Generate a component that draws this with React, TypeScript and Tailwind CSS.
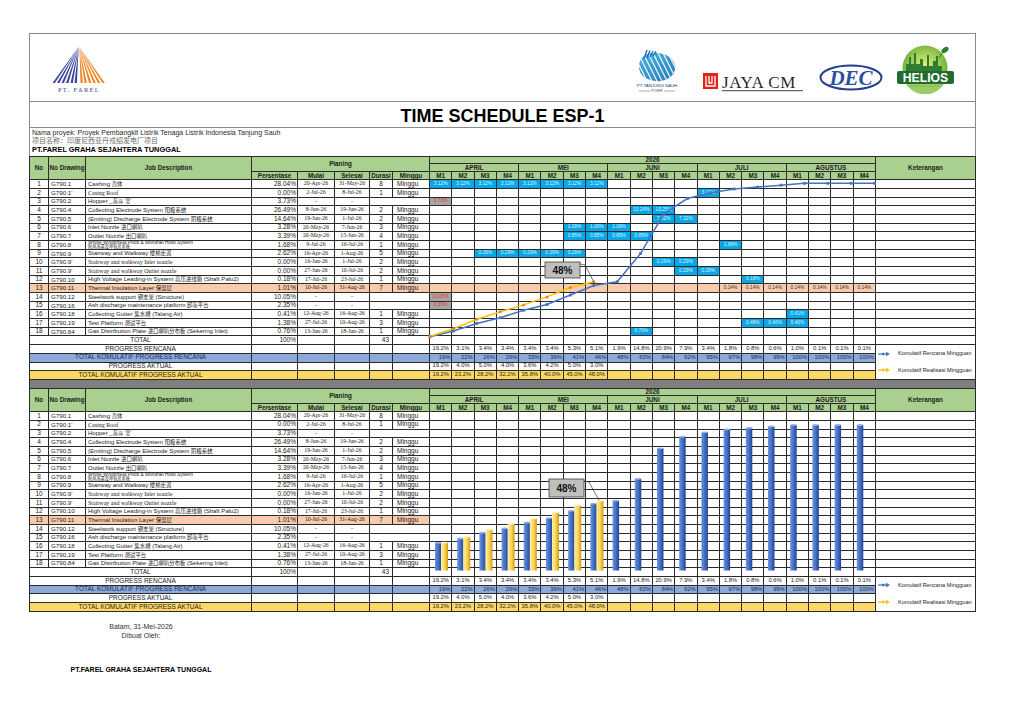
import React from "react";

const SERIF = "font-['Liberation_Serif','Noto_Sans_CJK_SC',serif]";
const C = "border-r border-b border-[#2a2a2a] flex items-center overflow-hidden whitespace-nowrap leading-none";
const GRID =
  "grid w-[947px] grid-cols-[19px_37px_166px_46px_37px_35px_23px_37px_repeat(20,22.3px)_100px] grid-rows-[7.4px_8px_8px_repeat(23,8.68px)] border-l border-t border-[#2a2a2a] text-[6.5px] text-[#1b1b1b]";

const MONTHS = ["APRIL", "MEI", "JUNI", "JULI", "AGUSTUS"];
const WEEKS = Array.from({ length: 20 }, (_, i) => i + 1);

const planCum = [19, 22, 26, 29, 33, 36, 41, 46, 48, 63, 84, 92, 95, 97, 98, 99, 100, 100, 100, 100];
const actualCum = [19.2, 23.2, 28.2, 32.2, 35.8, 40, 45, 48];
const planWeekly = ["19.2%", "3.1%", "3.4%", "3.4%", "3.4%", "3.4%", "5.3%", "5.1%", "1.9%", "14.8%", "20.9%", "7.9%", "3.4%", "1.8%", "0.8%", "0.6%", "1.0%", "0.1%", "0.1%", "0.1%"];
const actualWeekly = ["19.2%", "4.0%", "5.0%", "4.0%", "3.6%", "4.2%", "5.0%", "3.0%"];

function span(from: number, to: number, v: string) {
  const o: Record<number, string> = {};
  for (let i = from; i <= to; i++) o[i] = v;
  return o;
}

// CJK characters come out a little smaller than the latin text in the sheet
function mixed(text: string) {
  return (
    <span>
      {text.split(/([\u3000-\u9fff\uff00-\uffef]+)/).map((part, i) =>
        /[\u3000-\u9fff\uff00-\uffef]/.test(part) ? (
          <span key={i} className="text-[5.4px]">{part}</span>
        ) : (
          <React.Fragment key={i}>{part}</React.Fragment>
        )
      )}
    </span>
  );
}

type Task = {
  no: string;
  dwg: string;
  job: string;
  pct: string;
  start: string;
  end: string;
  dur?: string;
  cells: Record<number, string>;
  serif?: boolean;
  gray?: boolean;
  hl?: boolean;
  merged?: boolean;
  twoLine?: [string, string];
};

const tasks: Task[] = [
  { no: "1", dwg: "G790.1", job: "Cashing 壳体", pct: "28.04%", start: "20-Apr-26", end: "31-May-26", dur: "8", cells: span(1, 8, "3.12%") },
  { no: "2", dwg: "G790.1'", job: "Casing Roof", serif: true, pct: "0.00%", start: "2-Jul-26", end: "8-Jul-26", dur: "1", cells: { 13: "3.12%" } },
  { no: "3", dwg: "G790.2", job: "Hopper _灰斗 室", pct: "3.73%", start: "-", end: "-", merged: true, gray: true, cells: { 1: "3.73%" } },
  { no: "4", dwg: "G790.4", job: "Collecting Electrode System 阳极系统", pct: "26.49%", start: "8-Jun-26", end: "19-Jun-26", dur: "2", cells: { 10: "13.24%", 11: "13.25%" } },
  { no: "5", dwg: "G790.5", job: "(Emiting) Discharge Electrode System 阴极系统", pct: "14.64%", start: "19-Jun-26", end: "1-Jul-26", dur: "2", cells: span(11, 12, "7.32%") },
  { no: "6", dwg: "G790.6", job: "Inlet Nozzle 进口喇叭", pct: "3.28%", start: "20-May-26", end: "7-Jun-26", dur: "3", cells: span(7, 9, "1.09%") },
  { no: "7", dwg: "G790.7", job: "Outlet Nozzle 出口喇叭", pct: "3.39%", start: "20-May-26", end: "15-Jun-26", dur: "4", cells: span(7, 10, "0.85%") },
  { no: "8", dwg: "G790.8", job: "", twoLine: ["Whole Windshield Proof & Monorail Hoist System", "防风雨罩及单轨吊系统"], pct: "1.68%", start: "9-Jul-26", end: "16-Jul-26", dur: "1", cells: { 14: "1.68%" } },
  { no: "9", dwg: "G790.9", job: "Stairway and Walkway 楼梯走道", pct: "2.62%", start: "16-Apr-26", end: "1-Aug-26", dur: "5", cells: span(3, 7, "0.29%") },
  { no: "10", dwg: "G790.9'", job: "Stairway and walkway Inlet nozzle", serif: true, pct: "0.00%", start: "16-Jun-26", end: "1-Jul-26", dur: "2", cells: span(11, 12, "0.29%") },
  { no: "11", dwg: "G790.9'", job: "Stairway and walkway Outlet nozzle", serif: true, pct: "0.00%", start: "27-Jun-26", end: "10-Jul-26", dur: "2", cells: span(12, 13, "0.29%") },
  { no: "12", dwg: "G790.10", job: "High Voltage Leading-in System 高压进线箱 (Shaft Palu2)", pct: "0.18%", start: "17-Jul-26", end: "23-Jul-26", dur: "1", cells: { 15: "0.18%" } },
  { no: "13", dwg: "G790.11", job: "Thermal Insulation Layer 保温层", pct: "1.01%", start: "10-Jul-26", end: "31-Aug-26", dur: "7", hl: true, cells: span(14, 20, "0.14%") },
  { no: "14", dwg: "G790.12", job: "Steelwork support 钢支架 (Structure)", pct: "10.05%", start: "-", end: "-", merged: true, gray: true, cells: { 1: "10.05%" } },
  { no: "15", dwg: "G790.16", job: "Ash discharge maintenance platform 卸灰平台", pct: "2.35%", start: "-", end: "-", merged: true, gray: true, cells: { 1: "2.35%" } },
  { no: "16", dwg: "G790.18", job: "Collecting Gutter 集水槽 (Talang Air)", pct: "0.41%", start: "12-Aug-26", end: "16-Aug-26", dur: "1", cells: { 17: "0.41%" } },
  { no: "17", dwg: "G790.19", job: "Test Platform 测试平台", pct: "1.38%", start: "27-Jul-26", end: "10-Aug-26", dur: "3", cells: span(15, 17, "0.46%") },
  { no: "18", dwg: "G790.84", job: "Gas Distribution Plate 进口喇叭分布板 (Sekering Inlet)", pct: "0.76%", start: "13-Jun-26", end: "18-Jun-26", dur: "1", cells: { 10: "0.76%" } },
];

function HeaderCells() {
  const h = `${C} justify-center bg-[#a9d08e] font-bold text-[6.3px]`;
  return (
    <>
      <div className={`${h} row-span-3`}>No</div>
      <div className={`${h} row-span-3`}>No Drawing</div>
      <div className={`${h} row-span-3`}>Job Description</div>
      <div className={`${h} col-span-5 row-span-2`}>Planing</div>
      <div className={`${h} col-span-20`}>2026</div>
      <div className={`${h} row-span-3`}>Keterangan</div>
      {MONTHS.map((m) => (
        <div key={m} className={`${h} col-span-4`}>{m}</div>
      ))}
      {["Persentase", "Mulai", "Selesai", "Durasi", "Minggu"].map((t) => (
        <div key={t} className={h}>{t}</div>
      ))}
      {WEEKS.map((w) => (
        <div key={w} className={h}>M{((w - 1) % 4) + 1}</div>
      ))}
    </>
  );
}

function TaskRow({ t, showCells }: { t: Task; showCells: boolean }) {
  const bg = t.hl ? "bg-[#f8cbad]" : "bg-white";
  return (
    <>
      <div className={`${C} ${bg} justify-center`}>{t.no}</div>
      <div className={`${C} ${bg} pl-[2px] text-[6.2px]`}>{t.dwg}</div>
      <div className={`${C} ${bg} pl-[2px] text-[6px] ${t.serif ? SERIF : ""}`}>
        {t.twoLine ? (
          <div className="flex flex-col text-[4.8px] leading-[4.2px]">
            <span>{t.twoLine[0]}</span>
            <span className="text-[4.2px]">{t.twoLine[1]}</span>
          </div>
        ) : (
          mixed(t.job)
        )}
      </div>
      <div className={`${C} ${bg} justify-end pr-[1px]`}>{t.pct}</div>
      <div className={`${C} ${bg} justify-center text-[5.8px] ${SERIF}`}>{t.start}</div>
      <div className={`${C} ${bg} justify-center text-[5.8px] ${SERIF}`}>{t.end}</div>
      {t.merged ? (
        <div className={`${C} ${bg} col-span-2`} />
      ) : (
        <>
          <div className={`${C} ${bg} justify-center`}>{t.dur}</div>
          <div className={`${C} ${bg} pl-[4px]`}>Minggu</div>
        </>
      )}
      {WEEKS.map((w) => {
        const v = showCells ? t.cells[w] : undefined;
        let cls = "bg-white";
        if (v && t.gray) cls = "bg-[#a6a6a6] text-[#e5322d]";
        else if (v && t.hl) cls = "bg-[#f8cbad] text-[#333]";
        else if (v) cls = "bg-[#0aa7e8] text-[#dff4ff]";
        else if (t.hl && showCells) cls = "bg-[#f8cbad]";
        return (
          <div key={w} className={`${C} ${cls} justify-center text-[4.8px]`}>
            {v}
          </div>
        );
      })}
      <div className={`${C} bg-white`} />
    </>
  );
}

function Arrow({ color }: { color: string }) {
  return (
    <svg width="12" height="6" viewBox="0 0 12 6" className="shrink-0">
      <line x1="0" y1="3" x2="9" y2="3" stroke={color} strokeWidth="1.2" />
      <polygon points="8,0.8 12,3 8,5.2" fill={color} />
      <rect x="4" y="1.8" width="2.4" height="2.4" fill={color} />
    </svg>
  );
}

function SummaryRows() {
  const defs = [
    { label: "PROGRESS RENCANA", bg: "bg-white", txt: "", vals: planWeekly, align: "justify-center" },
    { label: "TOTAL KOMULATIF PROGRESS RENCANA", bg: "bg-[#8eaadb]", txt: "text-[#1d2b55]", vals: planCum.map((v) => `${v}%`), align: "justify-end pr-[1px]" },
    { label: "PROGRESS AKTUAL", bg: "bg-white", txt: "", vals: actualWeekly, align: "justify-center" },
    { label: "TOTAL KOMULATIF PROGRESS AKTUAL", bg: "bg-[#ffd966]", txt: "text-[#2b2410]", vals: actualCum.map((v) => `${v.toFixed(1)}%`), align: "justify-center" },
  ];
  return (
    <>
      <div className={`${C} col-span-3 justify-center bg-white`}>TOTAL</div>
      <div className={`${C} justify-end pr-[1px] bg-white`}>100%</div>
      <div className={`${C} bg-white`} />
      <div className={`${C} bg-white`} />
      <div className={`${C} justify-end pr-[3px] bg-white`}>43</div>
      <div className={`${C} bg-white`} />
      {WEEKS.map((w) => (
        <div key={w} className={`${C} bg-white`} />
      ))}
      <div className={`${C} bg-white`} />
      {defs.map((d, i) => (
        <React.Fragment key={d.label}>
          <div className={`${C} col-span-3 justify-center ${d.bg} ${d.txt}`}>{d.label}</div>
          {[0, 1, 2, 3, 4].map((k) => (
            <div key={k} className={`${C} ${d.bg}`} />
          ))}
          {WEEKS.map((w) => (
            <div key={w} className={`${C} ${d.bg} ${d.txt} ${d.align} text-[5.8px]`}>
              {d.vals[w - 1] ?? ""}
            </div>
          ))}
          {i === 0 && (
            <div className="row-span-4 border-r border-b border-[#2a2a2a] bg-white flex flex-col overflow-hidden">
              <div className="h-[17.36px] flex items-center pl-[2px] gap-[8px]">
                <Arrow color="#4472c4" />
                <span className="text-[5.6px] whitespace-nowrap">Komulatif Rencana Mingguan</span>
              </div>
              <div className="h-[17.36px] flex items-center pl-[2px] gap-[8px]">
                <Arrow color="#ffc000" />
                <span className="text-[5.6px] whitespace-nowrap">Komulatif Realisasi Mingguan</span>
              </div>
            </div>
          )}
        </React.Fragment>
      ))}
    </>
  );
}

function Callout({ x, y, h, tip }: { x: number; y: number; h: number; tip: [number, number] }) {
  return (
    <g>
      <polyline
        points={`${x + 35},${y + 2} ${x + 40},${y + 3} ${tip[0]},${tip[1]}`}
        fill="none"
        stroke="#3a3a3a"
        strokeWidth="0.7"
      />
      <rect x={x} y={y} width="35" height={h} fill="#bfbfbf" stroke="#404040" strokeWidth="0.8" />
      <text
        x={x + 17.5}
        y={y + h / 2 + 3.6}
        textAnchor="middle"
        fontFamily="Liberation Sans, sans-serif"
        fontWeight="bold"
        fontSize="10"
        fill="#111"
      >
        48%
      </text>
    </g>
  );
}

function LineOverlay() {
  const lx = (k: number) => 401 + 23.4 * k;
  const ly = (p: number) => 216.7 - 1.894 * p;
  const plan = planCum.map((p, k) => `${lx(k).toFixed(1)},${ly(p).toFixed(1)}`).join(" ");
  const act = actualCum.map((p, k) => `${lx(k).toFixed(1)},${ly(p).toFixed(1)}`).join(" ");
  return (
    <svg className="absolute left-0 top-0 pointer-events-none" width="947" height="224" viewBox="0 0 947 224">
      <polyline points={plan} fill="none" stroke="#4472c4" strokeWidth="1.5" />
      {planCum.map((p, k) => (
        <rect key={k} x={lx(k) - 1.4} y={ly(p) - 1.4} width="2.8" height="2.8" fill="#4472c4" />
      ))}
      <polyline points={act} fill="none" stroke="#ffc000" strokeWidth="1.5" />
      {actualCum.map((p, k) => (
        <circle key={k} cx={lx(k)} cy={ly(p)} r="1.5" fill="#ed7d31" />
      ))}
      <Callout x={516} y={106} h={16} tip={[lx(7), ly(48)]} />
    </svg>
  );
}

function BarOverlay() {
  const base = 182.5;
  const by = (p: number) => base - 1.455 * p;
  return (
    <svg className="absolute left-0 top-0 pointer-events-none" width="947" height="224" viewBox="0 0 947 224">
      <defs>
        <linearGradient id="gBlue" x1="0" x2="1" y1="0" y2="0">
          <stop offset="0" stopColor="#6a95e0" />
          <stop offset="0.55" stopColor="#3f6cc2" />
          <stop offset="1" stopColor="#25448a" />
        </linearGradient>
        <linearGradient id="gYel" x1="0" x2="1" y1="0" y2="0">
          <stop offset="0" stopColor="#fff0b3" />
          <stop offset="0.55" stopColor="#ffd44f" />
          <stop offset="1" stopColor="#c99a1c" />
        </linearGradient>
      </defs>
      {planCum.map((p, k) => {
        const x = 406 + 22.2 * k;
        const t = by(p);
        return (
          <g key={k}>
            <rect x={x} y={t} width="6.5" height={base - t} fill="url(#gBlue)" />
            <ellipse cx={x + 3.25} cy={t} rx="3.25" ry="0.9" fill="#93b3ec" />
          </g>
        );
      })}
      {actualCum.map((p, k) => {
        const x = 412 + 22.2 * k;
        const t = by(p);
        return (
          <g key={k}>
            <rect x={x} y={t} width="7" height={base - t} fill="url(#gYel)" />
            <ellipse cx={x + 3.5} cy={t} rx="3.5" ry="0.9" fill="#fff4c4" />
          </g>
        );
      })}
      <Callout x={520} y={91} h={18} tip={[570, 112.5]} />
    </svg>
  );
}

function ScheduleTable({ chart }: { chart: "line" | "bar" }) {
  return (
    <div className="relative w-[947px]">
      <div className={GRID}>
        <HeaderCells />
        {tasks.map((t) => (
          <TaskRow key={t.no} t={t} showCells={chart === "line"} />
        ))}
        <SummaryRows />
      </div>
      {chart === "line" ? <LineOverlay /> : <BarOverlay />}
    </div>
  );
}

function FarelLogo() {
  const left = [1.5, 6, 10.5, 15, 19.5, 23.5];
  const right = [29.5, 33.5, 38, 42.5, 47, 51.5];
  return (
    <svg width="56" height="48" viewBox="0 0 56 48" className="mt-[12px] ml-[21px]">
      {left.map((b) => (
        <polygon key={b} points={`27.6,1 ${b},37 ${b + 2.4},37`} fill="#3e47a0" />
      ))}
      {right.map((b) => (
        <polygon key={b} points={`28.4,1 ${b},37 ${b + 2.4},37`} fill="#ef8424" />
      ))}
      <text x="28" y="46" textAnchor="middle" fontFamily="Liberation Serif, serif" fontSize="6.5" letterSpacing="1.3" fill="#3e47a0">
        PT. FAREL
      </text>
    </svg>
  );
}

function TanjungLogo() {
  return (
    <svg width="60" height="44" viewBox="0 0 60 44" className="mt-[15px]">
      <defs>
        <clipPath id="tsClip">
          <path d="M12 18 C12 6 22 3 31 4 C42 5 49 12 48 20 C47 28 38 33 29 32 C19 31 12 26 12 18 Z" />
        </clipPath>
        <linearGradient id="tsGrad" x1="0" y1="0" x2="1" y2="1">
          <stop offset="0" stopColor="#56c2e8" />
          <stop offset="1" stopColor="#1a6fb3" />
        </linearGradient>
      </defs>
      <g clipPath="url(#tsClip)">
        <rect x="0" y="0" width="60" height="36" fill="url(#tsGrad)" />
        {[0, 1, 2, 3, 4, 5, 6, 7, 8].map((i) => (
          <line key={i} x1={4 + i * 5} y1="0" x2={22 + i * 5} y2="36" stroke="#ffffff" strokeWidth="1.1" />
        ))}
      </g>
      {[0, 1, 2, 3].map((i) => (
        <line key={i} x1={17 + i * 3} y1={10 - i} x2={20 + i * 3} y2={1 + i * 0.5} stroke="#1f73b8" strokeWidth="1.4" />
      ))}
      <text x="30" y="38" textAnchor="middle" fontFamily="Liberation Sans, sans-serif" fontSize="4.4" fill="#1d3d70">
        PT TANJUNG SAUH
      </text>
      <line x1="12" y1="42" x2="23" y2="42" stroke="#555" strokeWidth="0.5" />
      <text x="30" y="43" textAnchor="middle" fontFamily="Liberation Sans, sans-serif" fontSize="3" fill="#555">
        POWER
      </text>
      <line x1="37" y1="42" x2="48" y2="42" stroke="#555" strokeWidth="0.5" />
    </svg>
  );
}

function JayaLogo() {
  return (
    <svg width="102" height="22" viewBox="0 0 102 22" className="ml-[15px] mt-[36px]">
      <rect x="1" y="3" width="15" height="16" fill="#e2231a" />
      <path d="M4 6 V16 H13 V6 M7 6 V13 H10 V6" stroke="#ffffff" strokeWidth="1.3" fill="none" />
      <text x="20" y="17.5" fontFamily="Liberation Serif, serif" fontSize="17" letterSpacing="0.6" fill="#2a2a2a">
        JAYA CM
      </text>
      <line x1="20" y1="20.6" x2="101" y2="20.6" stroke="#666" strokeWidth="1.2" />
    </svg>
  );
}

function DecLogo() {
  return (
    <svg width="64" height="27" viewBox="0 0 64 27" className="ml-[15px] mt-[30px]">
      <ellipse cx="32" cy="13.5" rx="30.5" ry="12" fill="none" stroke="#23408e" strokeWidth="2" />
      <text x="32" y="21" textAnchor="middle" fontFamily="Liberation Serif, serif" fontStyle="italic" fontWeight="bold" fontSize="21" fill="#2c4fa0">
        DEC
      </text>
    </svg>
  );
}

function HeliosLogo() {
  return (
    <svg width="60" height="50" viewBox="0 0 60 50" className="ml-[13px] mt-[10px]">
      <defs>
        <radialGradient id="hlGlow" cx="0.5" cy="0.45" r="0.6">
          <stop offset="0" stopColor="#e8f07a" />
          <stop offset="1" stopColor="#5aa832" />
        </radialGradient>
      </defs>
      <circle cx="29" cy="24" r="22.5" fill="url(#hlGlow)" />
      <path d="M10 30 V20 H13 V13 H15 V20 H18 V9 H20 V20 H24 V15 H27 V22 H31 V11 H33 V22 H37 V17 H40 V12 H42 V22 H46 V30 Z" fill="#2f7d32" />
      <path d="M8 36 A22.5 22.5 0 0 0 50 36 Z" fill="#9ccc65" />
      <line x1="14" y1="42" x2="44" y2="42" stroke="#7cb342" strokeWidth="0.8" />
      <rect x="1" y="27" width="57" height="13" rx="2" fill="#216b2f" />
      <text x="29.5" y="37.5" textAnchor="middle" fontFamily="Liberation Sans, sans-serif" fontWeight="bold" fontSize="12.2" fill="#ffffff">
        HELIOS
      </text>
      <ellipse cx="49" cy="6" rx="4" ry="2.4" transform="rotate(-35 49 6)" fill="#2f7d32" />
      <line x1="46" y1="9" x2="43" y2="14" stroke="#2f7d32" strokeWidth="1" />
    </svg>
  );
}

export default function App() {
  return (
    <div className="w-[1024px] h-[724px] bg-white overflow-hidden font-['Liberation_Sans','Noto_Sans_CJK_SC',sans-serif] text-[#1b1b1b]">
      <div className="ml-[29px] pt-[33px] w-[947px]">
        <div className="h-[69px] border-x border-t border-b border-[#8a8a8a] flex items-start">
          <FarelLogo />
          <div className="ml-auto pr-[19px] flex items-start">
            <TanjungLogo />
            <JayaLogo />
            <DecLogo />
            <HeliosLogo />
          </div>
        </div>
        <div className="h-[26px] border-x border-b border-[#8a8a8a] flex items-center justify-center pt-[3px]">
          <h1 className="text-[18px] font-bold leading-none text-black">TIME SCHEDULE ESP-1</h1>
        </div>
        <div className="h-[28px] border-x border-[#8a8a8a] pl-[2px] pt-[0.5px] text-[7px] leading-[8.6px]">
          <div className="text-[#2a2a2a]">Nama proyek: Proyek Pembangkit Listrik Tenaga Listrik Indonesia Tanjung Sauh</div>
          <div className="text-[#6a6a6a]">项目名称：印度尼西亚丹戎绍发电厂项目</div>
          <div className="font-bold text-[7.4px] text-black">PT.FAREL GRAHA SEJAHTERA TUNGGAL</div>
        </div>
        <ScheduleTable chart="line" />
        <div className="h-[8px] bg-[#7f7f7f] border-x border-[#2a2a2a]" />
        <ScheduleTable chart="bar" />
        <div className="w-[224px] text-center text-[7px] leading-[9px] text-[#333] pt-[10px]">
          <div>Batam, 31-Mei-2026</div>
          <div>Dibuat Oleh:</div>
          <div className="mt-[25px] font-bold text-black">PT.FAREL GRAHA SEJAHTERA TUNGGAL</div>
        </div>
      </div>
    </div>
  );
}
